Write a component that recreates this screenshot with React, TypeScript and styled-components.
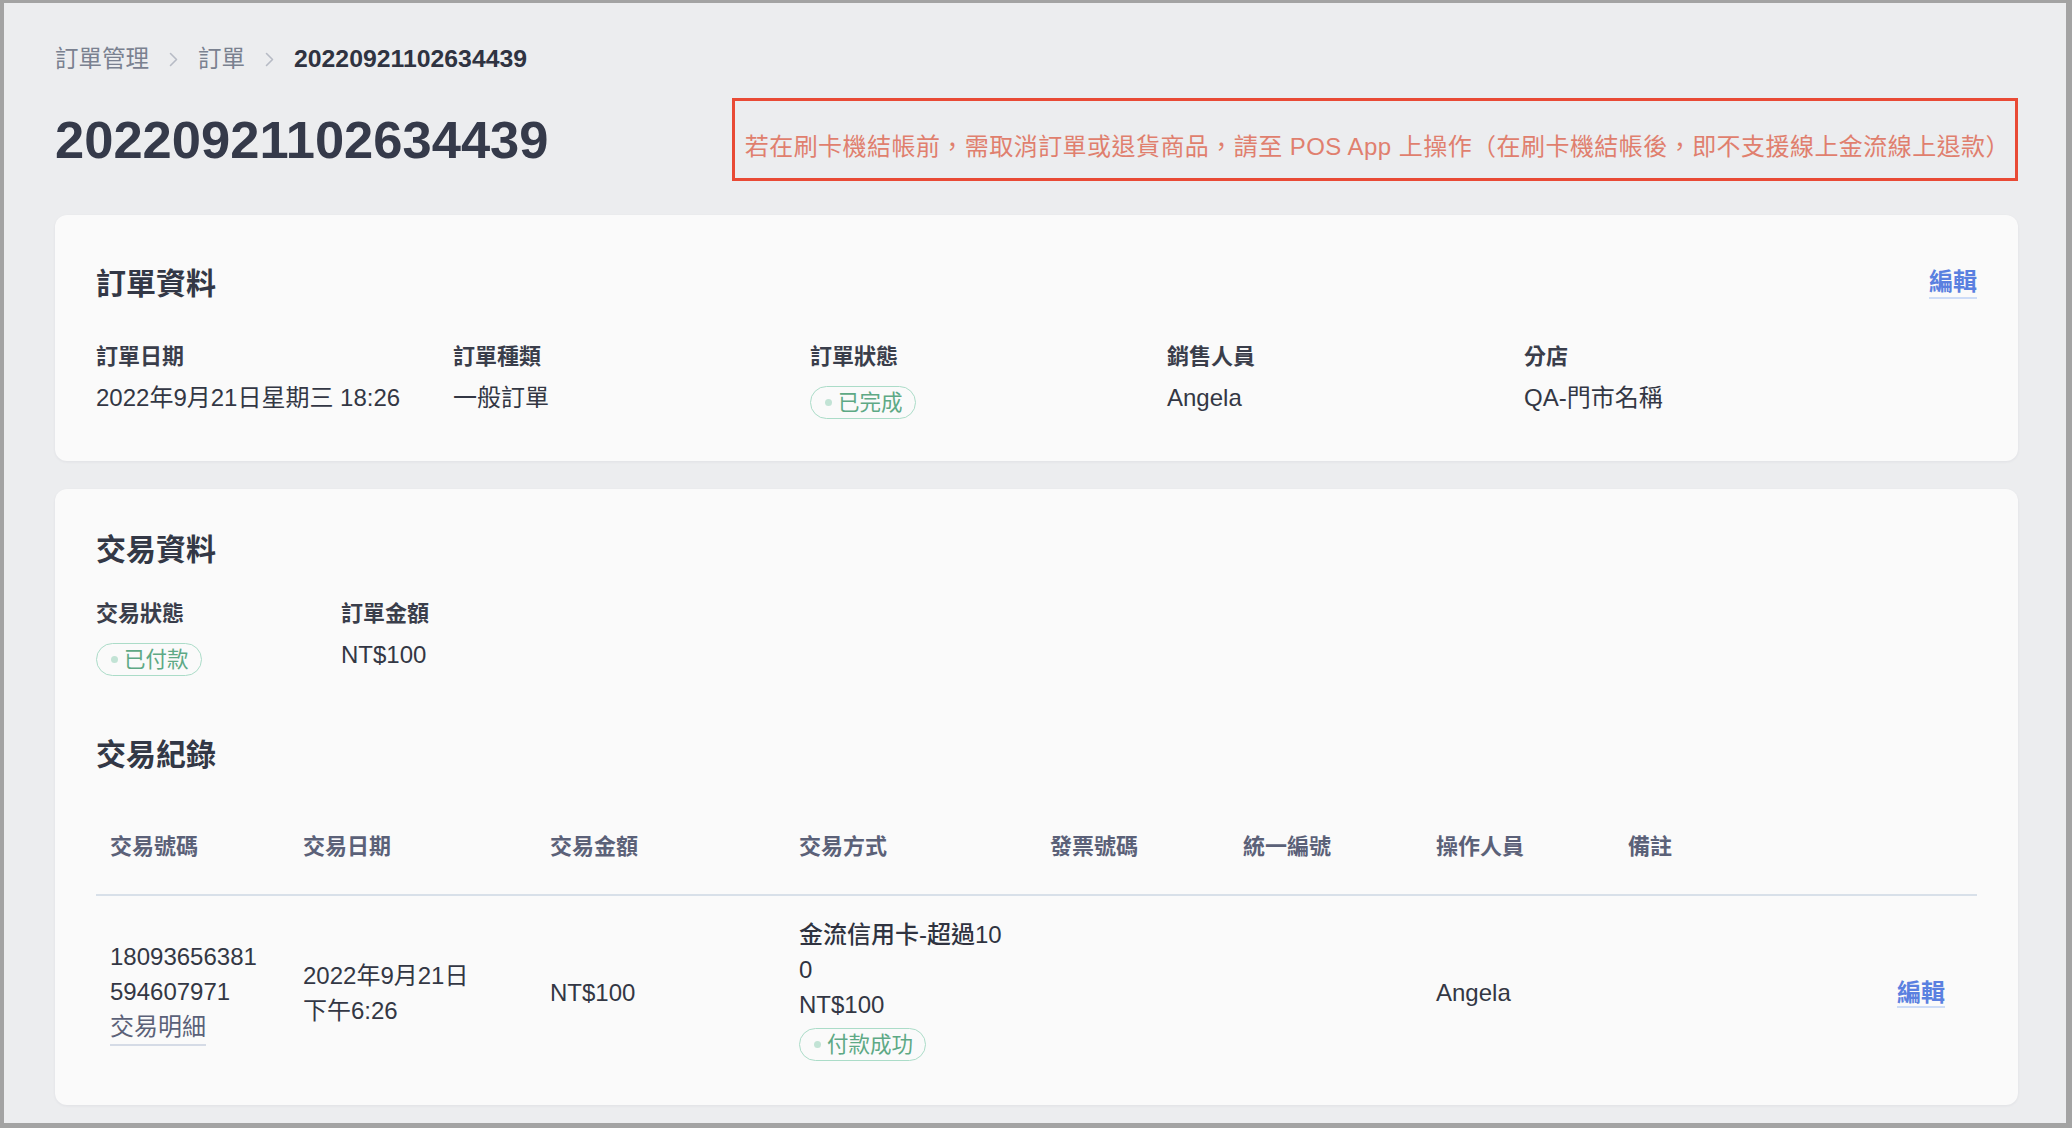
import React from 'react';
import styled, { createGlobalStyle } from 'styled-components';

const GlobalStyle = createGlobalStyle`
  html, body {
    margin: 0;
    padding: 0;
  }

  body {
    font-family: "Liberation Sans", "Noto Sans CJK TC", sans-serif;
    background: #a3a3a3;
  }
`;

const StyledFrame = styled.div`
  box-sizing: border-box;
  width: 2072px;
  height: 1128px;
  overflow: hidden;
  border-style: solid;
  border-color: #a3a3a3;
  border-width: 3px 6px 5px 4px;
  padding: 38px 48px 0 51px;
  background: #ecedef;
`;

const StyledBreadcrumb = styled.nav`
  display: flex;
  align-items: center;
  gap: 20px;
  font-size: 23.5px;
  line-height: 36px;
`;

const Crumb = styled.span<{ $current?: boolean }>`
  color: ${(p) => (p.$current ? '#2f3341' : '#7a8190')};
  font-weight: ${(p) => (p.$current ? 600 : 400)};
  font-size: ${(p) => (p.$current ? '24.8px' : 'inherit')};
`;

const StyledHeader = styled.header`
  display: flex;
  align-items: center;
  justify-content: space-between;
  margin: 21px 0 34px;
`;

const Title = styled.h1`
  margin: 0;
  font-size: 52.5px;
  line-height: 61px;
  font-weight: 700;
  color: #353a4a;
`;

const Alert = styled.div`
  border: 3px solid #e94a35;
  padding: 28px 5px 13px 10px;
  white-space: nowrap;
  font-size: 24px;
  letter-spacing: 0.45px;
  line-height: 36px;
  color: #e07f6e;
`;

const Card = styled.section`
  background: #fafafa;
  border-radius: 12px;
  padding: 38px 41px 35px;
  box-shadow: 0 1px 3px rgba(30, 40, 60, 0.06);

  & + & {
    margin-top: 28px;
  }
`;

const SectionHead = styled.div<{ $tall?: boolean }>`
  display: flex;
  align-items: center;
  justify-content: space-between;
  height: ${(p) => (p.$tall ? 60 : 45)}px;
`;

const SectionTitle = styled.h2<{ $top?: number }>`
  margin: ${(p) => p.$top || 0}px 0 0;
  font-size: 30px;
  line-height: 45px;
  font-weight: 700;
  color: #333846;
`;

const EditLink = styled.a`
  font-size: 24px;
  line-height: 30px;
  font-weight: 700;
  color: #5a80e0;
  text-decoration: none;
  border-bottom: 2px solid #cddcf7;
  cursor: pointer;
`;

const Fields = styled.div<{ $cols: string; $top: number }>`
  display: grid;
  grid-template-columns: ${(p) => p.$cols};
  margin-top: ${(p) => p.$top}px;
`;

const FieldLabel = styled.div`
  font-size: 22px;
  line-height: 34px;
  font-weight: 700;
  color: #3a3e4b;
`;

const FieldValue = styled.div`
  display: flow-root;
  margin-top: 6px;
  font-size: 24px;
  line-height: 36px;
  color: #333744;
`;

const StyledPill = styled.span`
  display: flex;
  align-items: center;
  gap: 6px;
  width: fit-content;
  height: 33px;
  box-sizing: border-box;
  margin: 6px 0 7px;
  padding: 0 12px 0 14px;
  border: 1.5px solid #abdcc8;
  border-radius: 17px;
  font-size: 21.5px;
  line-height: 30px;
  color: #5ea985;

  &::before {
    content: '';
    width: 7px;
    height: 7px;
    border-radius: 50%;
    background: #c2e3d5;
  }
`;

const Table = styled.div`
  margin-top: 23px;
`;

const COLS = '193px 247px 249px 251px 193px 193px 192px 192px 1fr';

const HeadRow = styled.div`
  display: grid;
  grid-template-columns: ${COLS};
  border-bottom: 2px solid #d8e0e9;
`;

const HeadCell = styled.div`
  padding: 30px 14px;
  font-size: 22px;
  line-height: 34px;
  font-weight: 700;
  color: #5b6178;
`;

const DataRow = styled.div`
  display: grid;
  grid-template-columns: ${COLS};
  align-items: center;
  padding: 21px 0 2px;
`;

const Cell = styled.div<{ $end?: boolean }>`
  display: flow-root;
  padding: 0 ${(p) => (p.$end ? 32 : 14)}px 0 14px;
  text-align: ${(p) => (p.$end ? 'right' : 'left')};
  font-size: 24px;
  line-height: 35px;
  color: #333744;
`;

const MethodName = styled.div`
  width: 210px;
  word-break: break-all;
  font-weight: 500;
  color: #2f3340;
`;

const DetailLink = styled.a`
  display: inline-block;
  color: #5b6178;
  text-decoration: none;
  border-bottom: 2px solid #d5dbe6;
  cursor: pointer;
`;

const Chevron = () => (
  <svg width='9' height='15' viewBox='0 0 9 15' fill='none'>
    <polyline points='1.5,1.5 7.5,7.5 1.5,13.5' stroke='#b7bbc5' strokeWidth='1.6' strokeLinecap='round' strokeLinejoin='round' />
  </svg>
);

const Pill: React.FC<{ children: React.ReactNode }> = ({ children }) => <StyledPill>{children}</StyledPill>;

const orderFields = [
  { label: '訂單日期', value: '2022年9月21日星期三 18:26' },
  { label: '訂單種類', value: '一般訂單' },
  { label: '訂單狀態', pill: '已完成' },
  { label: '銷售人員', value: 'Angela' },
  { label: '分店', value: 'QA-門市名稱' },
];

const tableHeads = ['交易號碼', '交易日期', '交易金額', '交易方式', '發票號碼', '統一編號', '操作人員', '備註', ''];

const App: React.FC = () => {
  return (
    <>
      <GlobalStyle />
      <StyledFrame>
        <StyledBreadcrumb>
          <Crumb>訂單管理</Crumb>
          <Chevron />
          <Crumb>訂單</Crumb>
          <Chevron />
          <Crumb $current>20220921102634439</Crumb>
        </StyledBreadcrumb>

        <StyledHeader>
          <Title>20220921102634439</Title>
          <Alert>若在刷卡機結帳前，需取消訂單或退貨商品，請至 POS App 上操作（在刷卡機結帳後，即不支援線上金流線上退款）</Alert>
        </StyledHeader>

        <Card>
          <SectionHead $tall>
            <SectionTitle>訂單資料</SectionTitle>
            <EditLink>編輯</EditLink>
          </SectionHead>
          <Fields $cols='repeat(5, 357px)' $top={27}>
            {orderFields.map((f) => (
              <div key={f.label}>
                <FieldLabel>{f.label}</FieldLabel>
                <FieldValue>{f.pill ? <Pill>{f.pill}</Pill> : f.value}</FieldValue>
              </div>
            ))}
          </Fields>
        </Card>

        <Card>
          <SectionHead>
            <SectionTitle>交易資料</SectionTitle>
          </SectionHead>
          <Fields $cols='245px 245px' $top={25}>
            <div>
              <FieldLabel>交易狀態</FieldLabel>
              <FieldValue>
                <Pill>已付款</Pill>
              </FieldValue>
            </div>
            <div>
              <FieldLabel>訂單金額</FieldLabel>
              <FieldValue>NT$100</FieldValue>
            </div>
          </Fields>

          <SectionTitle $top={49}>交易紀錄</SectionTitle>

          <Table>
            <HeadRow>
              {tableHeads.map((h, i) => (
                <HeadCell key={i}>{h}</HeadCell>
              ))}
            </HeadRow>
            <DataRow>
              <Cell>
                <div>18093656381</div>
                <div>594607971</div>
                <DetailLink>交易明細</DetailLink>
              </Cell>
              <Cell>
                <div>2022年9月21日</div>
                <div>下午6:26</div>
              </Cell>
              <Cell>NT$100</Cell>
              <Cell>
                <MethodName>金流信用卡-超過100</MethodName>
                <div>NT$100</div>
                <Pill>付款成功</Pill>
              </Cell>
              <Cell />
              <Cell />
              <Cell>Angela</Cell>
              <Cell />
              <Cell $end>
                <EditLink>編輯</EditLink>
              </Cell>
            </DataRow>
          </Table>
        </Card>
      </StyledFrame>
    </>
  );
};

export default React.memo(App);
